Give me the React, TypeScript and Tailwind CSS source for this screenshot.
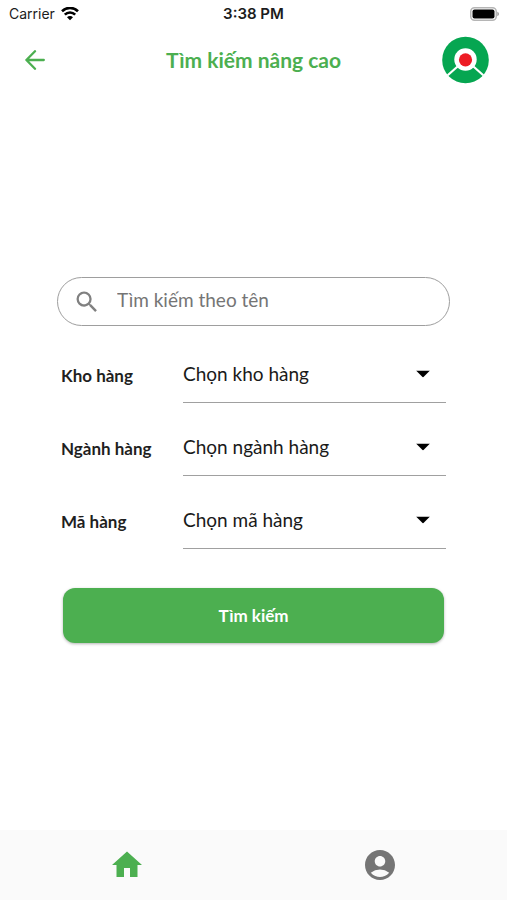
import { MdAccountCircle, MdHome, MdSearch } from "react-icons/md";

const fields = [
  { id: "warehouse", label: "Kho hàng", placeholder: "Chọn kho hàng" },
  { id: "category", label: "Ngành hàng", placeholder: "Chọn ngành hàng" },
  { id: "code", label: "Mã hàng", placeholder: "Chọn mã hàng" },
];

function StatusBar() {
  return (
    <div className="grid h-7 grid-cols-3 items-center px-2 font-['Inter',sans-serif] text-sm text-[#1c1c1c]">
      <div className="flex items-center gap-1.5 pl-px">
        <span>Carrier</span>
        <svg className="h-[14px] w-[18px]" viewBox="0 0 18 14" fill="none" stroke="#000" strokeWidth="2.6" aria-hidden="true">
          <path d="M1 4.2a11.4 11.4 0 0 1 16 0" />
          <path d="M3.8 7.6a7.4 7.4 0 0 1 10.4 0" />
          <path d="M6 10.2a4.2 4.2 0 0 1 6 0l-3 3z" fill="#000" stroke="none" />
        </svg>
      </div>
      <span className="text-center text-[15px] font-semibold">3:38 PM</span>
      <svg className="h-[14px] w-[30px] justify-self-end" viewBox="0 0 30 14" aria-hidden="true">
        <rect x="1.75" y="0.75" width="25.5" height="12.5" rx="3.8" fill="#fff" stroke="#b5b5b5" strokeWidth="1.5" />
        <rect x="3.5" y="2.5" width="22" height="9" rx="2" fill="#000" />
        <path d="M28.3 4.8c2.2.7 2.2 3.7 0 4.4z" fill="#9c9c9c" />
      </svg>
    </div>
  );
}

function Logo() {
  return (
    <svg className="size-12" viewBox="0 0 48 48" role="img" aria-label="Logo">
      <circle cx="24.5" cy="24" r="23.3" fill="#06a651" />
      <path d="M24.5 23.5 6.7 39.3M24.5 23.5l17.8 15.8" stroke="#fff" strokeWidth="2.2" />
      <circle cx="24.5" cy="23.5" r="11.2" fill="#fff" />
      <circle cx="24.5" cy="23.8" r="6.6" fill="#ed1c24" />
    </svg>
  );
}

export default function App() {
  return (
    <div className="flex min-h-screen flex-col bg-white font-['Lato',sans-serif] text-[#1f1f1f]">
      <StatusBar />
      <header className="flex h-16 items-center justify-between px-[18px]">
        <button type="button" aria-label="Quay lại" className="flex size-12 items-center pl-[7px] text-[#4caf50]">
          <svg className="size-5" viewBox="0 0 20 20" fill="none" stroke="currentColor" strokeWidth="2.3" strokeLinecap="round" strokeLinejoin="round" aria-hidden="true">
            <path d="M18.8 10H1.4M10 1.2 1.4 10l8.6 8.8" />
          </svg>
        </button>
        <h1 className="text-[21px] font-bold text-[#4caf50]">Tìm kiếm nâng cao</h1>
        <Logo />
      </header>

      <main className="flex flex-1 flex-col justify-center px-[57px] pb-0.5">
        <form onSubmit={(event) => event.preventDefault()}>
          <div className="flex h-[49px] items-center gap-4 rounded-full border border-[#9e9e9e] pr-5 pl-[15px] text-[#808080]">
            <MdSearch className="size-7 shrink-0" aria-hidden="true" />
            <input
              type="search"
              aria-label="Tìm kiếm theo tên"
              placeholder="Tìm kiếm theo tên"
              className="w-full min-w-0 bg-transparent pb-0.5 text-[19px] outline-none placeholder:text-[#757575]"
            />
          </div>

          <div className="mx-1 pt-1">
            {fields.map((field) => (
              <div key={field.id} className="flex items-center pt-[15px]">
                <label htmlFor={field.id} className="w-[122px] shrink-0 pt-1 text-[17px] font-bold">
                  {field.label}
                </label>
                <div className="relative min-w-0 flex-1">
                  <select
                    id={field.id}
                    className="h-[58px] w-full appearance-none border-b border-[#a0a0a0] bg-transparent pt-0.5 pr-10 text-[19px] text-[#1a1a1a] outline-none"
                  >
                    <option>{field.placeholder}</option>
                  </select>
                  <svg className="pointer-events-none absolute top-1/2 right-4 h-[7px] w-[14px] -translate-y-1/2" viewBox="0 0 14 7" aria-hidden="true">
                    <path d="M0 0h14L7 7z" />
                  </svg>
                </div>
              </div>
            ))}
          </div>

          <div className="mx-1.5 mt-[39px]">
            <button type="submit" className="h-[55px] w-full rounded-xl bg-[#4caf50] text-[17px] font-bold text-white shadow-[0_1px_3px_rgba(0,0,0,0.3)]">
              Tìm kiếm
            </button>
          </div>
        </form>
      </main>

      <nav className="flex h-[70px] bg-[#fafafa]">
        <a href="#home" aria-label="Trang chủ" className="flex flex-1 items-center justify-center text-[#4caf50]">
          <MdHome className="size-9" />
        </a>
        <a href="#account" aria-label="Tài khoản" className="flex flex-1 items-center justify-center text-[#757575]">
          <MdAccountCircle className="size-9" />
        </a>
      </nav>
    </div>
  );
}
